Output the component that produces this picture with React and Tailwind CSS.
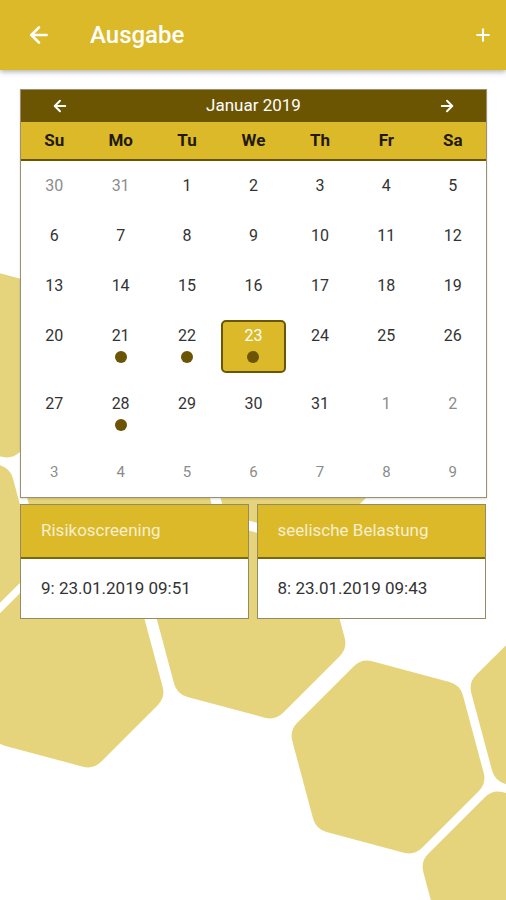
import React from "react";
import { ArrowLeft, ArrowRight, Plus } from "lucide-react";

const HEX = [
  [-14, 361],
  [-62, 540],
  [117, 492],
  [297, 442],
  [67, 671],
  [249, 622],
  [388, 757],
  [567, 709],
  [519, 888],
];

function hexPoints(cx, cy, r) {
  const pts = [];
  for (let k = 0; k < 6; k++) {
    const a = ((-105 + 60 * k) * Math.PI) / 180;
    pts.push(`${(cx + r * Math.cos(a)).toFixed(1)},${(cy + r * Math.sin(a)).toFixed(1)}`);
  }
  return pts.join(" ");
}

const rows = [
  [["30", 0], ["31", 0], ["1", 1], ["2", 1], ["3", 1], ["4", 1], ["5", 1]],
  [["6", 1], ["7", 1], ["8", 1], ["9", 1], ["10", 1], ["11", 1], ["12", 1]],
  [["13", 1], ["14", 1], ["15", 1], ["16", 1], ["17", 1], ["18", 1], ["19", 1]],
  [["20", 1], ["21", 1, "dot"], ["22", 1, "dot"], ["23", 1, "dot", "sel"], ["24", 1], ["25", 1], ["26", 1]],
  [["27", 1], ["28", 1, "dot"], ["29", 1], ["30", 1], ["31", 1], ["1", 0], ["2", 0]],
  [["3", 0], ["4", 0], ["5", 0], ["6", 0], ["7", 0], ["8", 0], ["9", 0]],
];

const days = ["Su", "Mo", "Tu", "We", "Th", "Fr", "Sa"];

function Cell({ d, last }) {
  const [label, inMonth, dot, sel] = d;
  return (
    <div className="pt-[9px] pb-[6px] flex justify-center">
      <div
        className={
          "w-[65px] border-2 rounded-[5px] pt-[3px] pb-[6px] flex flex-col items-center " +
          (sel ? "bg-[#dcb928] border-[#6b5403]" : "border-transparent")
        }
      >
        <span
          className={
            "leading-[22px] " +
            (last ? "text-[15px] " : "text-[16px] ") +
            (sel ? "text-white" : inMonth ? "text-[#333333]" : "text-[#8c8c8c]")
          }
        >
          {label}
        </span>
        {dot && <div className="mt-[4px] mb-[2px] w-3 h-3 rounded-full bg-[#6b5403]" />}
      </div>
    </div>
  );
}

export default function App() {
  return (
    <div
      className="relative w-[506px] h-[900px] overflow-hidden bg-white"
      style={{ fontFamily: "Roboto, 'Noto Sans', sans-serif" }}
    >
      <svg className="absolute inset-0" width="506" height="900" viewBox="0 0 506 900">
        {HEX.map(([x, y], i) => (
          <polygon
            key={i}
            points={hexPoints(x, y, 80)}
            fill="#e6d47c"
            stroke="#e6d47c"
            strokeWidth="38"
            strokeLinejoin="round"
          />
        ))}
      </svg>

      <div className="relative flex flex-col">
        <header className="h-[70px] bg-[#dcb928] flex items-center shadow-[0_2px_5px_rgba(0,0,0,0.3)]">
          <div className="w-[90px] pl-[26px] flex items-center">
            <ArrowLeft size={26} strokeWidth={2.5} color="white" />
          </div>
          <span className="flex-1 text-white text-[24px] font-medium">Ausgabe</span>
          <div className="pr-[13px] flex items-center">
            <Plus size={20} strokeWidth={2.5} color="white" />
          </div>
        </header>

        <div className="px-[20px] pt-[19px] flex flex-col">
          <div className="w-[467px] border border-[#9a9174] bg-white shadow-[0_1px_2px_rgba(0,0,0,0.15)]">
            <div className="h-[32px] bg-[#6b5503] flex items-center justify-between px-[30px]">
              <ArrowLeft size={18} strokeWidth={2.5} color="white" />
              <span className="text-white text-[17px]">Januar 2019</span>
              <ArrowRight size={18} strokeWidth={2.5} color="white" />
            </div>
            <div className="h-[39px] bg-[#dcb928] border-b-2 border-[#6b5403] grid grid-cols-7 items-center">
              {days.map((d) => (
                <span key={d} className="text-center text-[17px] font-bold text-[#1f1a0a]">
                  {d}
                </span>
              ))}
            </div>
            {rows.map((r, i) => (
              <div key={i} className="grid grid-cols-7">
                {r.map((d, j) => (
                  <Cell key={j} d={d} last={i === 5} />
                ))}
              </div>
            ))}
          </div>

          <div className="mt-[6px] flex gap-[8px]">
            {[
              ["Risikoscreening", "9: 23.01.2019 09:51", "w-[229px]"],
              ["seelische Belastung", "8: 23.01.2019 09:43", "w-[230px]"],
            ].map(([t, v, w]) => (
              <div key={t} className={w + " border border-[#968a62] bg-white"}>
                <div className="h-[54px] bg-[#dcb928] border-b-2 border-[#7c6610] flex items-center px-[20px]">
                  <span className="text-[17px] text-[#f6efd0]">{t}</span>
                </div>
                <div className="h-[59px] flex items-center px-[20px]">
                  <span className="text-[17px] text-[#333333]">{v}</span>
                </div>
              </div>
            ))}
          </div>
        </div>
      </div>
    </div>
  );
}
